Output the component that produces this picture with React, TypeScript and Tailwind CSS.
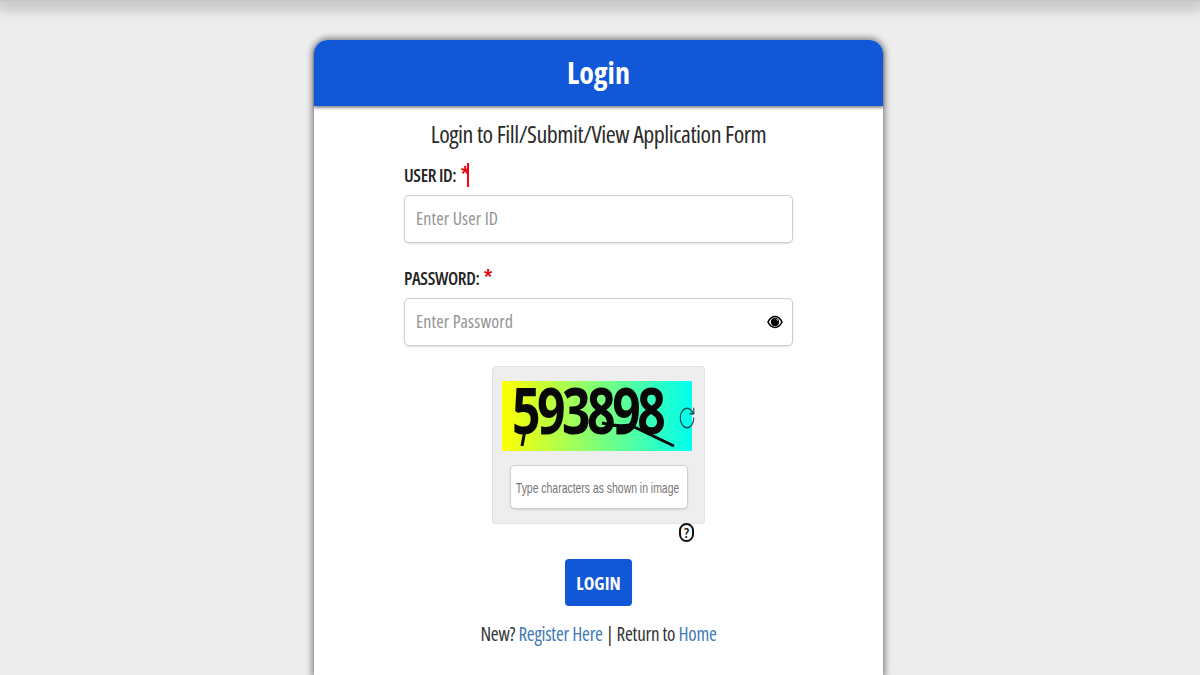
import React from 'react';
import { RotateCw } from 'lucide-react';

const font = "[font-family:'Open_Sans',sans-serif] [font-stretch:75%]";

function EyeIcon() {
  return (
    <svg className="h-[16px] w-[16px]" viewBox="0 0 16 16">
      <path d="M1 8 C3 4 5.5 2.5 8 2.5 S13 4 15 8 C13 12 10.5 13.5 8 13.5 S3 12 1 8Z" fill="#fff" stroke="#000" strokeWidth="1.6" />
      <circle cx="8" cy="8" r="4.2" fill="#000" />
      <path d="M8.5 4.8 A3.2 3.2 0 0 1 11.2 7.5 Z" fill="#fff" />
    </svg>
  );
}

function Field({ label, placeholder, children, className }: { label: string; placeholder: string; children?: React.ReactNode; className?: string }) {
  return (
    <div className={className}>
      <div className="flex h-[30px] items-center text-[18px] font-semibold leading-[30px] tracking-[-0.35px] text-[#222]">
        {label}
        <span className="relative ml-1 -mt-1 text-[22px] text-[#e8000f]">*</span>
        {children}
      </div>
      <div className="mt-[5px] flex h-[48px] items-center justify-between rounded-[5px] border border-[#cfcfcf] bg-white pl-[11px] pr-[9px] text-[18px] tracking-[0.1px] text-[#949494] shadow-[0_1px_2px_rgba(0,0,0,0.12)]">
        <span className="pb-[2px]">{placeholder}</span>
        {placeholder === 'Enter Password' && <EyeIcon />}
      </div>
    </div>
  );
}

export default function App() {
  return (
    <div className={`h-[675px] overflow-hidden bg-[#ededed] ${font}`}>
      <div className="h-[2px] bg-[#c8c8c8] shadow-[0_2px_14px_4px_rgba(0,0,0,0.25)]" />
      <div className="mt-[38px] ml-[314px] w-[569px] rounded-t-[14px] bg-white shadow-[0_0_6px_2px_rgba(0,0,0,0.45)]">
        <div className="flex h-[66px] items-center justify-center rounded-t-[14px] bg-[#1058d8] pb-[2px] text-[30px] font-bold text-white shadow-[0_2px_3px_rgba(0,0,0,0.45)]">
          Login
        </div>
        <div className="h-[570px] pt-[11px]">
          <h2 className="text-center text-[24px] leading-[33px] tracking-[-0.46px] text-[#2b2b2b]">Login to Fill/Submit/View Application Form</h2>
          <div className="mx-auto w-[389px]">
            <Field label="USER ID:" placeholder="Enter User ID" className="mt-[10px]">
              <span className="-ml-[2px] h-[24px] w-[1.5px] bg-[#ff0010]" />
            </Field>
            <Field label="PASSWORD:" placeholder="Enter Password" className="mt-[20px]" />
          </div>
          <div className="relative mt-[20px] ml-[178px] h-[158px] w-[213px] rounded-[3px] border border-[#e2e2e2] bg-[#eeeeee] px-[9px] pt-[14px]">
            <div className="relative h-[70px] w-[190px] bg-[linear-gradient(90deg,#ffff00,#00ffee)]">
              <span className="absolute left-[10px] top-[4px] inline-block origin-left scale-x-[0.78] text-[64px] font-bold leading-[50px] tracking-[-4.5px] text-[#080808] [font-stretch:100%]">
                593898
              </span>
              <svg className="absolute inset-0" width="190" height="70" viewBox="0 0 190 70">
                <path d="M20 65 L23 49 M100 42 Q115 46 128 44 L172 65" fill="none" stroke="#080808" strokeWidth="3" />
              </svg>
              <RotateCw className="absolute left-[176px] top-[24px] h-[26px] w-[18px] text-[#12505a]" strokeWidth={1.5} preserveAspectRatio="none" />
            </div>
            <div className="mt-[14px] ml-[8px] flex h-[44px] w-[178px] items-center justify-center overflow-hidden rounded-[5px] border border-[#cfcfcf] bg-white pt-[3px] pr-[3px] [font-family:'Liberation_Sans',sans-serif] text-[15px] text-[#777] shadow-[0_1px_2px_rgba(0,0,0,0.12)]">
              <span className="inline-block scale-x-[0.695] whitespace-nowrap">Type characters as shown in image</span>
            </div>
            <span className="absolute left-[186px] top-[156px] flex h-[19px] w-[15px] items-center justify-center rounded-full border-2 border-[#111] bg-white text-[15px] font-semibold text-[#111]">
              ?
            </span>
          </div>
          <button className="mt-[35px] ml-[251px] flex h-[47px] w-[67px] items-center justify-center rounded-[4px] bg-[#1058d8] pt-px text-[18px] font-bold text-white">
            LOGIN
          </button>
          <p className="mt-[13px] text-center text-[19px] leading-[30px] tracking-[-0.25px] text-[#333]">
            New? <a className="text-[#3f7ab5]">Register Here</a> | Return to <a className="text-[#3f7ab5]">Home</a>
          </p>
        </div>
      </div>
    </div>
  );
}
